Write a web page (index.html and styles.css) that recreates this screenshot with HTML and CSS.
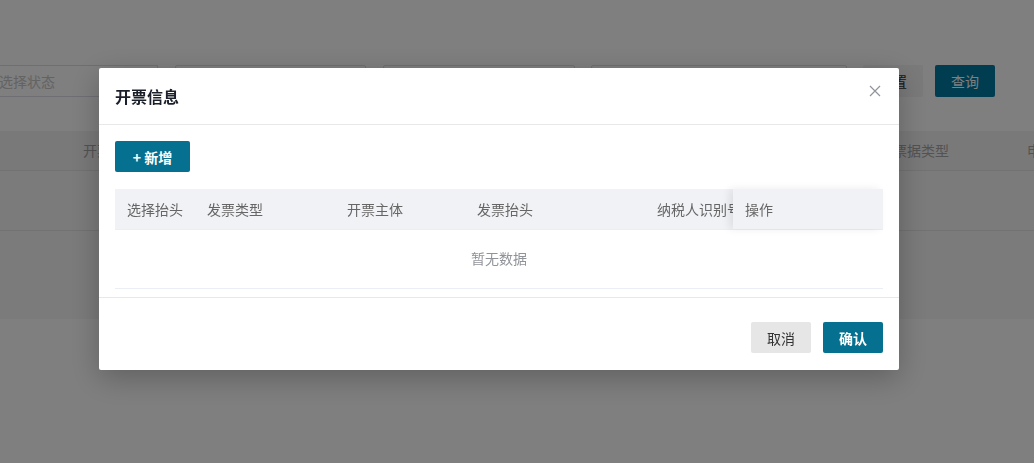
FILE: index.html
```html
<!DOCTYPE html>
<html lang="zh-CN">
<head>
    <meta charset="UTF-8">
    <title>开票信息</title>
    <link rel="stylesheet" href="styles.css">
</head>
<body>
    <!-- 页面内容 -->
    <div class="page">
        <div class="filter-bar">
            <div class="filter-input first">选择状态</div>
            <div class="filter-input w191"></div>
            <div class="filter-input w192"></div>
            <div class="filter-input w256"></div>
            <button class="btn-reset">重置</button>
            <button class="btn-query">查询</button>
        </div>

        <div class="list-table">
            <div class="list-head">
                <span class="lh-a">开票时间</span>
                <span class="lh-b">票据类型</span>
                <span class="lh-c">申请人</span>
            </div>
            <div class="list-row"></div>
        </div>
    </div>

    <!-- 遮罩 + 弹窗 -->
    <div class="mask">
        <div class="dialog">
            <div class="dialog-header">
                <span class="dialog-title">开票信息</span>
                <span class="dialog-close">
                    <svg width="12" height="12" viewBox="0 0 12 12">
                        <path d="M1 1 L11 11 M11 1 L1 11" stroke="#909399" stroke-width="1.2" fill="none"/>
                    </svg>
                </span>
            </div>

            <div class="dialog-body">
                <button class="btn-add">+ 新增</button>

                <div class="inv-table">
                    <div class="inv-head">
                        <div class="cell c1">选择抬头</div>
                        <div class="cell c2">发票类型</div>
                        <div class="cell c3">开票主体</div>
                        <div class="cell c4">发票抬头</div>
                        <div class="cell c5">纳税人识别号</div>
                        <div class="cell c-fixed">操作</div>
                    </div>
                    <div class="inv-empty">暂无数据</div>
                </div>
            </div>

            <div class="dialog-footer">
                <button class="btn-cancel">取消</button>
                <button class="btn-ok">确认</button>
            </div>
        </div>
    </div>
</body>
</html>
```

FILE: styles.css
```css
body {
    margin: 0;
    padding: 0;
    background-color: #ffffff;
    font-family: "Noto Sans CJK SC", "Noto Sans", sans-serif;
    font-size: 14px;
    color: #333;
    overflow: hidden;
}

button {
    font-family: inherit;
    font-size: 14px;
    border: none;
    border-radius: 2px;
    cursor: pointer;
}

/* 背景页面 */
.page {
    padding-top: 65px;
    height: 463px;
    box-sizing: border-box;
}
.filter-bar {
    display: flex;
    align-items: center;
    height: 32px;
}
.filter-input {
    flex-shrink: 0;
    box-sizing: border-box;
    height: 32px;
    border: 1px solid #dcdfe6;
    border-radius: 2px;
    margin-right: 17px;
    line-height: 30px;
    color: #c6c6c6;
    font-size: 14px;
}
.filter-input.first {
    width: 170px;
    margin-left: -12px;
    padding-left: 11px;
    border-left: none;
    border-radius: 0;
}
.w191 {
    width: 191px;
}
.w192 {
    width: 192px;
    margin-right: 16px;
}
.w256 {
    width: 256px;
    margin-right: 16px;
}
.btn-reset {
    flex-shrink: 0;
    width: 60px;
    height: 32px;
    background-color: #f4f4f4;
    color: #333;
    margin-right: 12px;
}
.btn-query {
    flex-shrink: 0;
    width: 60px;
    height: 32px;
    background-color: #007aa0;
    color: #fff;
}

.list-table {
    margin-top: 34px;
    height: 188px;
    background-color: #f7f7f7;
}
.list-head {
    position: relative;
    height: 39px;
    border-bottom: 1px solid #e4e4e4;
    background-color: #f3f3f3;
    line-height: 39px;
    color: #a6a6a6;
}
.list-head span {
    position: absolute;
    white-space: nowrap;
}
.lh-a { left: 83px; }
.lh-b { left: 893px; }
.lh-c { left: 1027px; }
.list-row {
    height: 59px;
    border-bottom: 1px solid #e4e4e4;
}

/* 遮罩 */
.mask {
    position: fixed;
    top: 0;
    left: 0;
    right: 0;
    bottom: 0;
    background-color: rgba(0, 0, 0, 0.5);
    padding: 68px 0 0 99px;
}

/* 弹窗 */
.dialog {
    width: 800px;
    background-color: #fff;
    border-radius: 2px;
    box-shadow: 0 8px 30px rgba(0, 0, 0, 0.25);
}
.dialog-header {
    display: flex;
    justify-content: space-between;
    align-items: center;
    height: 56px;
    padding: 0 18px 0 16px;
    border-bottom: 1px solid #e8e8e8;
}
.dialog-title {
    font-size: 16px;
    font-weight: 600;
    color: #1a1f29;
}
.dialog-close {
    display: flex;
    margin-top: -10px;
}

.dialog-body {
    padding: 16px 16px 8px;
}
.btn-add {
    width: 75px;
    height: 31px;
    background-color: #05708f;
    color: #fff;
    font-weight: 600;
    border-radius: 2px;
}

.inv-table {
    margin-top: 17px;
    border-bottom: 1px solid #ebeef5;
}
.inv-head {
    display: flex;
    height: 40px;
    background-color: #f1f2f5;
    border-bottom: 1px solid #ebeef5;
    color: #666;
}
.cell {
    box-sizing: border-box;
    padding-left: 12px;
    line-height: 40px;
    white-space: nowrap;
    overflow: hidden;
}
.c1 { width: 80px; }
.c2 { width: 140px; }
.c3 { width: 130px; }
.c4 { width: 180px; }
.c5 { width: 88px; }
.c-fixed {
    flex: 1;
    background-color: #f1f2f5;
    box-shadow: -4px 0 8px rgba(0, 0, 0, 0.08);
}
.inv-empty {
    height: 58px;
    line-height: 56px;
    text-align: center;
    color: #909399;
}

.dialog-footer {
    display: flex;
    justify-content: flex-end;
    gap: 12px;
    padding: 24px 16px 17px;
    border-top: 1px solid #e8e8e8;
}
.btn-cancel {
    width: 60px;
    height: 31px;
    background-color: #e6e6e6;
    color: #333;
}
.btn-ok {
    width: 60px;
    height: 31px;
    background-color: #05708f;
    color: #fff;
    font-weight: 600;
}
```
